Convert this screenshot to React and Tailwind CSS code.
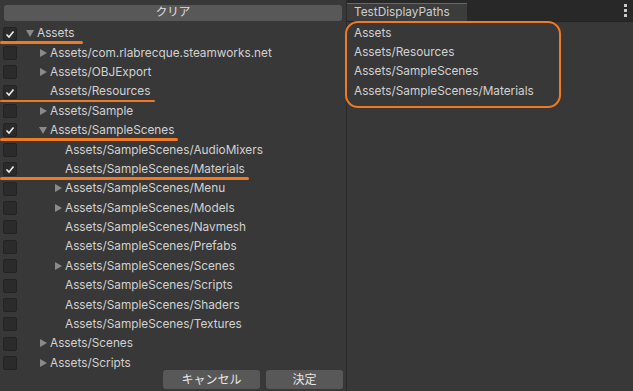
import React from "react";

const rows = [
  { label: "Assets", level: 0, arrow: "down", checked: true, mark: 83 },
  { label: "Assets/com.rlabrecque.steamworks.net", level: 1, arrow: "right" },
  { label: "Assets/OBJExport", level: 1, arrow: "right" },
  { label: "Assets/Resources", level: 1, checked: true, mark: 155 },
  { label: "Assets/Sample", level: 1, arrow: "right" },
  { label: "Assets/SampleScenes", level: 1, arrow: "down", checked: true, mark: 178 },
  { label: "Assets/SampleScenes/AudioMixers", level: 2 },
  { label: "Assets/SampleScenes/Materials", level: 2, checked: true, mark: 249 },
  { label: "Assets/SampleScenes/Menu", level: 2, arrow: "right" },
  { label: "Assets/SampleScenes/Models", level: 2, arrow: "right" },
  { label: "Assets/SampleScenes/Navmesh", level: 2 },
  { label: "Assets/SampleScenes/Prefabs", level: 2 },
  { label: "Assets/SampleScenes/Scenes", level: 2, arrow: "right" },
  { label: "Assets/SampleScenes/Scripts", level: 2 },
  { label: "Assets/SampleScenes/Shaders", level: 2 },
  { label: "Assets/SampleScenes/Textures", level: 2 },
  { label: "Assets/Scenes", level: 1, arrow: "right" },
  { label: "Assets/Scripts", level: 1, arrow: "right" },
];

const selected = [
  "Assets",
  "Assets/Resources",
  "Assets/SampleScenes",
  "Assets/SampleScenes/Materials",
];

// arrow column x per level
const arrowPad = ["pl-[26px]", "pl-[39px]", "pl-[54px]"];

const Arrow = ({ dir }) => {
  if (dir === "down") {
    return (
      <svg width="8" height="8" viewBox="0 0 8 8" className="shrink-0">
        <polygon points="0,1 8,1 4,8" fill="#8a8a8a" />
      </svg>
    );
  }
  if (dir === "right") {
    return (
      <svg width="8" height="8" viewBox="0 0 8 8" className="shrink-0">
        <polygon points="1,0 8,4 1,8" fill="#8a8a8a" />
      </svg>
    );
  }
  return <span className="w-[8px] shrink-0" />;
};

const CheckBox = ({ checked }) => (
  <div className="w-[14px] h-[14px] rounded-[2px] bg-[#2b2b2b] border border-[#232323] flex items-center justify-center shrink-0">
    {checked && (
      <svg width="10" height="10" viewBox="0 0 10 10">
        <polyline points="1.5,5.5 4,8 8.5,2.5" fill="none" stroke="#f0f0f0" strokeWidth="1.6" />
      </svg>
    )}
  </div>
);

const Row = ({ row }) => (
  <div className="relative h-[19.4px] flex items-center">
    <div className="absolute left-[3px] top-[3px]">
      <CheckBox checked={row.checked} />
    </div>
    <div className={`flex items-center gap-[3px] ${arrowPad[row.level]}`}>
      <Arrow dir={row.arrow} />
      <span className="text-[11.8px] leading-[14px] text-[#d2d2d2] whitespace-nowrap">{row.label}</span>
    </div>
    {row.mark && (
      <div
        className="absolute left-0 bottom-[-1px] h-[2.5px] bg-[#f07a22] rounded-full"
        style={{ width: row.mark }}
      />
    )}
  </div>
);

export default function App() {
  return (
    <div className="w-[633px] h-[391px] flex bg-[#383838] overflow-hidden font-['Inter','Noto_Sans_CJK_JP',sans-serif]">
      <div className="w-[347px] h-full flex flex-col border-r border-[#2a2a2a] shrink-0">
        <div className="pt-[5px] px-[4px]">
          <div className="h-[16px] bg-[#585858] rounded-[3px] flex items-center justify-center text-[11.5px] text-[#e0e0e0]">
            クリア
          </div>
        </div>
        <div className="pt-[2.5px] h-[349px]">
          {rows.map((r) => (
            <Row key={r.label} row={r} />
          ))}
        </div>
        <div className="flex gap-[6px] pl-[163px] pr-[3px]">
          <div className="w-[97px] h-[19px] bg-[#585858] rounded-[3px] flex items-center justify-center text-[12px] text-[#e6e6e6]">
            キャンセル
          </div>
          <div className="flex-1 h-[19px] bg-[#585858] rounded-[3px] flex items-center justify-center text-[12px] text-[#e6e6e6]">
            決定
          </div>
        </div>
      </div>
      <div className="flex-1 h-full flex flex-col">
        <div className="h-[22px] bg-[#282828] flex items-end justify-between border-b border-[#232323]">
          <div className="h-[18px] w-[120px] bg-[#3c3c3c] border-t border-[#4d6f96] flex items-center pl-[7px] text-[11.8px] text-[#cfcfcf]">
            TestDisplayPaths
          </div>
          <div className="flex flex-col gap-[2px] pr-[6px] self-center">
            <span className="w-[3px] h-[3px] bg-[#c8c8c8]" />
            <span className="w-[3px] h-[3px] bg-[#c8c8c8]" />
            <span className="w-[3px] h-[3px] bg-[#c8c8c8]" />
          </div>
        </div>
        <div className="relative flex-1">
          <div className="absolute left-[-2px] top-[-1px] w-[216px] h-[87px] border-2 border-[#f07a22] rounded-[13px]" />
          <div className="pl-[7px] pt-[2px] flex flex-col">
            {selected.map((s) => (
              <div key={s} className="h-[19.3px] flex items-center text-[11.8px] text-[#d2d2d2]">
                {s}
              </div>
            ))}
          </div>
        </div>
      </div>
    </div>
  );
}
